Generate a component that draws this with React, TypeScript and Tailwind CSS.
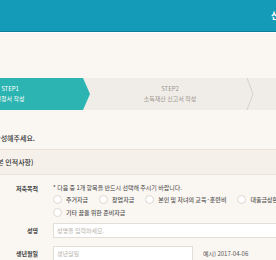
export default function App() {
  const purposes = [
    ['주거자금', '창업자금', '본인 및 자녀의 교육·훈련비', '대출금상환자금'],
    ['기타 꿈을 위한 준비자금'],
  ]

  return (
    <div className="w-[276px] h-[260px] overflow-hidden bg-[#faf6f1] font-['Noto_Sans_CJK_KR','Noto_Sans',sans-serif] text-[#333]">
      {/* Top bar */}
      <div className="h-[31px] bg-[#139bb8] flex items-center whitespace-nowrap">
        <span className="pl-[271px] text-[9px] font-bold text-white">신청서</span>
      </div>
      <div className="h-[1px] bg-[#0e7f98]" />
      <div className="h-[1px] bg-white" />

      <div className="-ml-[70px] w-[420px]">
        {/* Steps */}
        <div className="mt-[45px] h-[32px] flex bg-[#f0ede8] relative">
          <div className="w-[160px] h-full bg-[#2bb4b1] text-white flex flex-col items-center justify-center leading-[10px] text-[6px] [clip-path:polygon(0_0,calc(100%-7px)_0,100%_50%,calc(100%-7px)_100%,0_100%)]">
            <span>STEP1</span>
            <span>신청서 작성</span>
          </div>
          <div className="w-[160px] h-full text-[#9d978f] flex flex-col items-center justify-center leading-[10px] text-[6px]">
            <span>STEP2</span>
            <span>소득재산 신고서 작성</span>
          </div>
          <svg className="absolute left-[316px] top-0" width="8" height="32" viewBox="0 0 8 32">
            <polyline points="1,0 7,16 1,32" fill="none" stroke="#d6d1c9" strokeWidth="1" />
          </svg>
        </div>

        {/* Intro */}
        <div className="mt-[23px] pl-[24px] text-[7px] leading-[10px] whitespace-nowrap font-medium">
          가입신청서를 작성해주세요.
        </div>

        {/* Section band */}
        <div className="mt-[6px] h-[26px] border-y border-[#e9e3db] bg-[#f5f1ea] pl-[23px] flex items-center text-[7px] whitespace-nowrap font-medium">
          신청인 정보 (기본 인적사항)
        </div>

        {/* Form */}
        <div className="pt-[8px] text-[6px] whitespace-nowrap">
          <div className="flex">
            <div className="w-[108px] text-right font-bold text-[#444] leading-[10px] pt-[1px]">저축목적</div>
            <div className="ml-[15px] flex flex-col">
              <div className="leading-[10px] text-[#444]">* 다음 중 1개 항목을 반드시 선택해 주시기 바랍니다.</div>
              <div className="flex flex-col gap-[3px] mt-[1px]">
                {purposes.map((row, i) => (
                  <div key={i} className="flex gap-[11px]">
                    {row.map((p) => (
                      <label key={p} className="flex items-center gap-[4px] h-[10px] text-[#555] font-medium">
                        <span className="w-[9px] h-[9px] rounded-full border border-[#ddd7cf] bg-white" />
                        {p}
                      </label>
                    ))}
                  </div>
                ))}
              </div>
            </div>
          </div>

          <div className="flex items-center mt-[6px]">
            <div className="w-[108px] text-right font-bold text-[#444]">성명</div>
            <input
              className="ml-[15px] w-[280px] h-[15px] border border-[#e3ded6] bg-white px-[3px] text-[6px] placeholder:text-[#b9b3ab] outline-none"
              placeholder="성명을 입력하세요."
            />
          </div>

          <div className="flex items-center mt-[8px]">
            <div className="w-[108px] text-right font-bold text-[#444]">생년월일</div>
            <input
              className="ml-[15px] w-[140px] h-[15px] border border-[#e3ded6] bg-white px-[3px] text-[6px] placeholder:text-[#b9b3ab] outline-none"
              placeholder="생년월일"
            />
            <span className="ml-[10px] text-[#555]">예시) 2017-04-06</span>
          </div>
        </div>
      </div>
    </div>
  )
}
